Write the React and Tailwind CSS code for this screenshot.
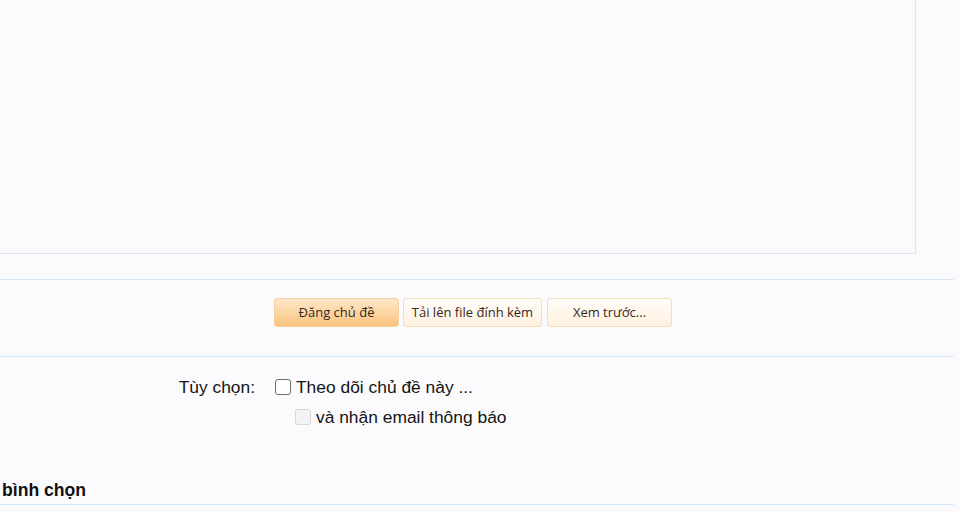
import React from "react";

// Bottom part of a "new thread" form: editor box, submit buttons, options
export default function App() {
  const buttonBase =
    "h-[29px] rounded-[3px] border text-[13px] text-[#35291c] flex items-center justify-center";

  return (
    <div className="w-[960px] h-[512px] bg-[#fbfbfe] overflow-hidden" style={{ fontFamily: '"Liberation Sans", Arial, sans-serif' }}>
      <div className="w-[954px]">
        {/* editor area (top and left edges are off screen) */}
        <div className="w-[916px] h-[254px] border-r border-b border-[#d9e6ee] bg-[#fbfbfe]" />

        <div className="h-[26px] border-b border-[#d6e8f5]" />

        {/* submit buttons */}
        <div className="flex h-[77px] border-b border-[#d3e9fb]">
          <div className="w-[274px] shrink-0" />
          <div className="flex gap-[4px] pt-[18px]" style={{ fontFamily: '"Open Sans", "Noto Sans", sans-serif' }}>
            <button className={`${buttonBase} w-[125px] border-[#f4cf9c] bg-gradient-to-b from-[#fee8c9] to-[#f9c27d]`}>
              Đăng chủ đề
            </button>
            <button className={`${buttonBase} w-[139px] border-[#f6dcb8] bg-gradient-to-b from-[#fffdf9] to-[#fff1de]`}>
              Tải lên file đính kèm
            </button>
            <button className={`${buttonBase} w-[125px] ml-[1px] border-[#f6dcb8] bg-gradient-to-b from-[#fffdf9] to-[#fff1de]`}>
              Xem trước...
            </button>
          </div>
        </div>

        {/* options */}
        <div className="flex pt-[20px] h-[123px] text-[17.4px] text-[#141414]">
          <div className="w-[256px] shrink-0 text-right pr-[1px] leading-[20px]">Tùy chọn:</div>
          <div className="pl-[19px] flex flex-col gap-[10px]">
            <label className="flex items-center gap-[5px] leading-[20px]">
              <span className="w-[16px] h-[16px] rounded-[3px] border border-[#6e6e6e] bg-white" />
              <span>Theo dõi chủ đề này ...</span>
            </label>
            <label className="flex items-center gap-[5px] pl-[20px] leading-[20px]">
              <span className="w-[16px] h-[16px] rounded-[3px] border border-[#d6d6d6] bg-[#f4f4f4]" />
              <span>và nhận email thông báo</span>
            </label>
          </div>
        </div>

        <div className="h-[25px] border-b border-[#d3e9fb] pl-[2px] text-[17.6px] font-bold text-[#111] leading-[20px]">
          bình chọn
        </div>
      </div>
    </div>
  );
}
